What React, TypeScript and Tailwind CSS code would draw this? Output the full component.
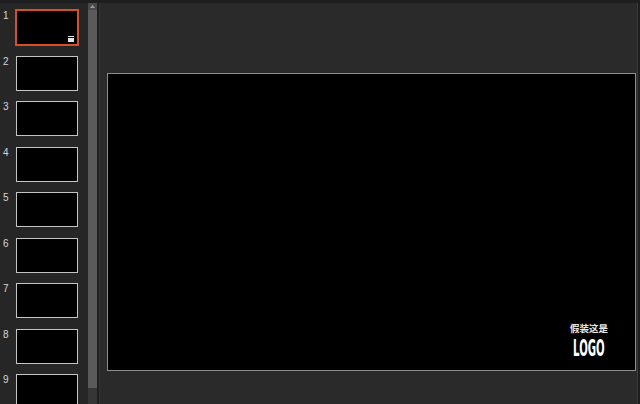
import React from "react";

const nums = [1, 2, 3, 4, 5, 6, 7, 8, 9];

export default function App() {
  return (
    <div
      className="w-[640px] h-[404px] overflow-hidden bg-[#282828] flex flex-col"
      style={{ fontFamily: '"Liberation Sans", "Noto Sans CJK SC", sans-serif' }}
    >
      <div className="h-[3px] shrink-0 bg-[#1e1e1e]" />
      <div className="flex flex-1 min-h-0">
        {/* thumbnails panel */}
        <div className="w-[88px] shrink-0 bg-[#262626] overflow-hidden">
          <div className="flex flex-col gap-[10.5px] pt-[7px]">
            {nums.map((n) => (
              <div key={n} className="flex items-start h-[35px]">
                <div className="w-[15px] pl-[3px] text-[10px] leading-none text-[#d6d6d6] pt-[1px]">
                  {n}
                </div>
                {n === 1 ? (
                  <div className="w-[64px] h-[37px] -mt-[1px] border-2 border-[#d4502a] bg-black relative">
                    <div className="absolute right-[3px] bottom-[2px] w-[6px] h-[6px] flex flex-col gap-[1px]">
                      <div className="h-[1px] bg-[#e6e6e6]" />
                      <div className="h-[4px] bg-[#e6e6e6]" />
                    </div>
                  </div>
                ) : (
                  <div className="ml-[1px] w-[62px] h-[35px] border border-[#c4c4c4] bg-black" />
                )}
              </div>
            ))}
          </div>
        </div>
        {/* scrollbar */}
        <div className="w-[9px] shrink-0 bg-[#3a3a3a] flex flex-col">
          <div className="h-[7px] shrink-0 bg-[#4a4a4a] flex items-center justify-center">
            <svg width="5" height="3" viewBox="0 0 5 3">
              <path d="M2.5 0 L5 3 L0 3 Z" fill="#9a9a9a" />
            </svg>
          </div>
          <div className="h-[378px] shrink-0 bg-[#5a5a5a]" />
          <div className="flex-1 bg-[#363636]" />
        </div>
        <div className="w-[2px] shrink-0 bg-[#1f1f1f]" />
        <div className="w-[1px] shrink-0 bg-[#343434]" />
        {/* main area */}
        <div className="flex-1 bg-[#2a2a2a] pl-[7px] pt-[70px]">
          <div className="w-[529px] h-[298px] border border-[#8e8e8e] bg-black flex flex-col items-end justify-end pr-[27px] pb-[13px]">
            <div className="w-[38px] flex flex-col items-center">
              <div
                className="text-[9.5px] leading-none font-bold text-[#e8e8e8] whitespace-nowrap"
                style={{ fontFamily: '"Noto Sans CJK SC", sans-serif' }}
              >
                假装这是
              </div>
              <div className="mt-[7px] w-[38px] h-[17px] flex justify-center">
                <span
                  className="shrink-0 text-[23px] leading-[17px] font-bold text-white scale-x-[0.44] origin-center whitespace-nowrap"
                  style={{ fontFamily: '"DejaVu Sans", sans-serif' }}
                >
                  LOGO
                </span>
              </div>
            </div>
          </div>
        </div>
        <div className="w-[1px] shrink-0 bg-[#3a3a3a]" />
        <div className="w-[2px] shrink-0 bg-[#1e1e1e]" />
      </div>
    </div>
  );
}
